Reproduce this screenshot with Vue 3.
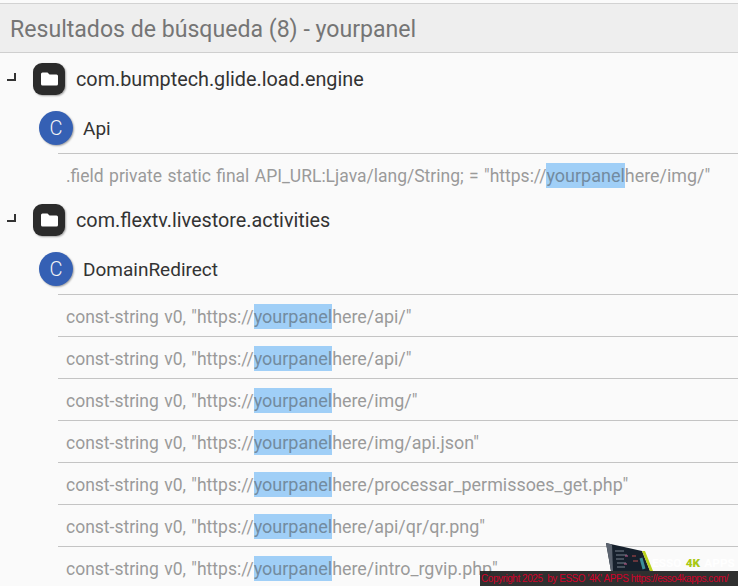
<script setup>
const groups = [
  {
    pkg: 'com.bumptech.glide.load.engine',
    cls: 'Api',
    rows: [{ pre: '.field private static final API_URL:Ljava/lang/String; = "https://', post: 'here/img/"' }]
  },
  {
    pkg: 'com.flextv.livestore.activities',
    cls: 'DomainRedirect',
    rows: [
      'here/api/"',
      'here/api/"',
      'here/img/"',
      'here/img/api.json"',
      'here/processar_permissoes_get.php"',
      'here/api/qr/qr.png"',
      'here/intro_rgvip.php"'
    ].map((post) => ({ pre: 'const-string v0, "https://', post }))
  }
]
</script>

<template>
  <div class="page">
    <header class="title">Resultados de búsqueda (8) - yourpanel</header>
    <section v-for="g in groups" :key="g.pkg">
      <div class="pkg">
        <span class="corner"></span>
        <span class="folder">
          <svg width="17" height="14" viewBox="0 0 17 14"><path d="M1.500 .5h5l2 2h7a1.500 1.500 0 0 1 1.500 1.500v8a1.500 1.500 0 0 1-1.500 1.500h-14A1.500 1.500 0 0 1 0 12V2A1.500 1.500 0 0 1 1.500 .5z" fill="#fff"/></svg>
        </span>
        <span class="pkg-name">{{ g.pkg }}</span>
      </div>
      <div class="cls">
        <span class="badge">C</span>
        <span class="cls-name">{{ g.cls }}</span>
      </div>
      <div v-for="(r, i) in g.rows" :key="i" class="row">
        <span class="pre">{{ r.pre }}</span><mark>yourpanel</mark>{{ r.post }}
      </div>
    </section>
    <div class="promo">
      <svg class="laptop" width="48" height="28" viewBox="0 0 48 28">
        <path d="M0 0L36 8L44 28H5z" fill="#16202c"/>
        <path d="M0 0L6 1.500L7 28H5z" fill="#5c6470"/>
        <path d="M36 8L39 8L47 28H44z" fill="#b9d21c"/>
        <path d="M9 8h9M10 12h11M10 16h8M11 20h9M11 24h8" stroke="#77808c" stroke-width="1"/>
        <path d="M19 13h3M18 21h3" stroke="#c85a8c" stroke-width="1"/>
        <path d="M26 13h4M27 18h5" stroke="#b84a4a" stroke-width="1"/>
        <path d="M35 15l3 11" stroke="#3c8f99" stroke-width="3"/>
      </svg>
      <span class="brand">ESSO <b>4K</b> APPS</span>
      <div class="copyright">Copyright 2025&nbsp; by ESSO '4K' APPS https://esso4kapps.com/</div>
    </div>
  </div>
</template>

<style>
html, body { margin: 0; background: #fafafa; }
</style>

<style scoped>
.page {
  position: relative;
  width: 738px;
  height: 586px;
  overflow: hidden;
  background: #fafafa;
  padding-top: 3px;
  box-sizing: border-box;
  font-family: Roboto, "Liberation Sans", sans-serif;
}
.title {
  height: 48px;
  line-height: 52px;
  background: #eeeeee;
  border-top: 1px solid #d2d2d2;
  border-bottom: 1px solid #cfcfcf;
  padding-left: 10px;
  font-size: 23.100px;
  color: #757575;
}
section:first-of-type { margin-top: 1px; }
.pkg {
  height: 49px;
  display: flex;
  align-items: center;
}
.corner {
  width: 9px;
  height: 8px;
  margin-left: 7px;
  margin-bottom: 4px;
  border-right: 2px solid #333;
  border-bottom: 2px solid #333;
  box-sizing: border-box;
}
.folder {
  width: 32px;
  height: 32px;
  margin-left: 17px;
  border-radius: 9px;
  background: #2b2b2b;
  box-shadow: 1px 1px 2px rgba(0,0,0,.35);
  display: flex;
  align-items: center;
  justify-content: center;
}
.pkg-name {
  margin-left: 11px;
  margin-top: 2px;
  font-size: 19.800px;
  color: #333;
}
.cls {
  height: 50px;
  display: flex;
  align-items: center;
}
.badge {
  width: 34px;
  height: 34px;
  margin-left: 39px;
  border-radius: 50%;
  background: #3560b4;
  box-shadow: 1px 1px 2px rgba(0,0,0,.35);
  color: #f4f4f4;
  font-size: 20px;
  font-weight: 300;
  display: flex;
  align-items: center;
  justify-content: center;
}
.cls-name {
  margin-left: 10px;
  margin-top: 1px;
  font-size: 19px;
  color: #333;
}
.row {
  height: 41px;
  margin-left: 58px;
  border-top: 1px solid #c4c4c4;
  padding-left: 8px;
  line-height: 44px;
  white-space: nowrap;
  font-size: 17.900px;
  color: #9a9a9a;
}
.pre {
  font-size: 17.500px;
  word-spacing: 1.050px;
}
mark {
  font-size: 18px;
  background: #a0cff7;
  color: #728ba0;
  padding: 2px 0;
}
.promo {
  position: absolute;
  left: 480px;
  right: 0;
  bottom: 0;
  height: 43px;
}
.laptop {
  position: absolute;
  left: 126px;
  top: 0;
}
.brand {
  position: absolute;
  left: 172px;
  top: 13px;
  font-size: 11.800px;
  font-weight: 700;
  word-spacing: 1.400px;
  color: #fff;
  white-space: nowrap;
}
.brand b { color: #a9c814; }
.copyright {
  position: absolute;
  left: 0;
  right: 0;
  bottom: 0;
  height: 15px;
  padding-left: 1px;
  line-height: 16px;
  background: rgba(30,30,30,.92);
  color: #d2002a;
  font-family: "Liberation Sans", sans-serif;
  font-size: 10px;
  letter-spacing: -.45px;
  white-space: nowrap;
  overflow: hidden;
}
</style>
